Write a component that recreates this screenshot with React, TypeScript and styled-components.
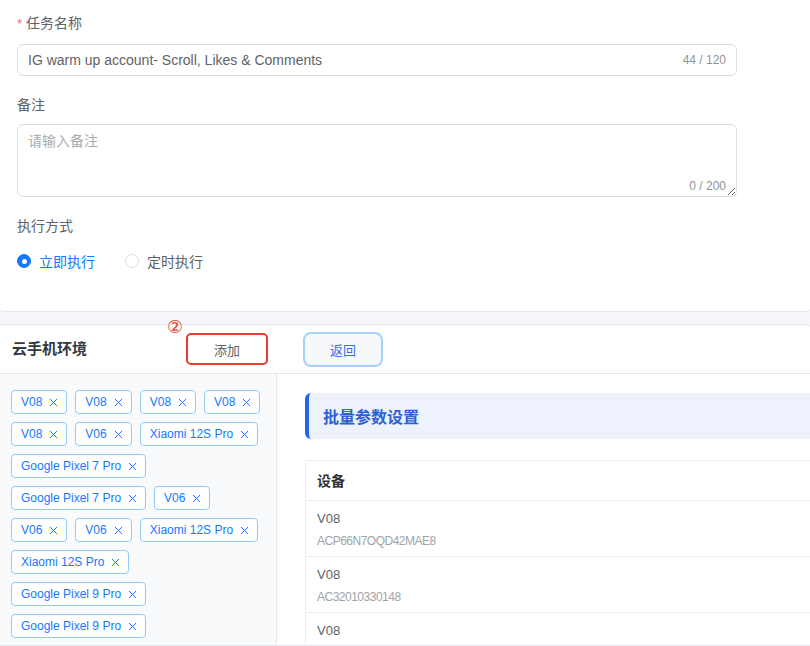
import React from "react";
import styled, { createGlobalStyle } from "styled-components";

const GlobalStyle = createGlobalStyle`
  html, body {
    margin: 0;
    padding: 0;
    background: #f5f7fa;
    font-family: "Liberation Sans", "Noto Sans CJK SC", sans-serif;
  }
  * {
    box-sizing: border-box;
  }
`;

const Page = styled.div`
  width: 810px;
  height: 646px;
  overflow: hidden;
  display: flex;
  flex-direction: column;
  gap: 12px;
  background: #f5f7fa;
`;

const TopCard = styled.section`
  height: 312px;
  flex-shrink: 0;
  background: #fff;
  border-bottom: 1px solid #e4e7ed;
  border-radius: 0 0 4px 4px;
  padding: 12px 17px 0;
`;

const FormItem = styled.div<{ $mb?: number }>`
  width: 720px;
  margin-bottom: ${(p) => p.$mb ?? 18}px;
`;

const Label = styled.div<{ $mb?: number }>`
  font-size: 14px;
  line-height: 22px;
  color: #5f6266;
  margin-bottom: ${(p) => p.$mb ?? 9}px;

  .req {
    color: #f56c6c;
    margin-right: 4px;
    font-size: 13px;
  }
`;

const InputBox = styled.div`
  height: 32px;
  display: flex;
  align-items: center;
  border: 1px solid #dcdfe6;
  border-radius: 6px;
  padding: 0 10px;
  background: #fff;
`;

const TextInput = styled.input`
  flex: 1;
  border: none;
  outline: none;
  padding: 0;
  font-family: inherit;
  font-size: 14px;
  color: #5f6266;
  background: transparent;
`;

const Count = styled.span`
  font-size: 12px;
  color: #909399;
  white-space: nowrap;
`;

const AreaWrap = styled.div`
  position: relative;
`;

const TextArea = styled.textarea`
  display: block;
  width: 100%;
  height: 73px;
  border: 1px solid #dcdfe6;
  border-radius: 6px;
  padding: 5px 10px;
  font-family: inherit;
  font-size: 14px;
  line-height: 22px;
  color: #5f6266;
  outline: none;
  resize: vertical;

  &::placeholder {
    color: #a8abb2;
  }
`;

const AreaCount = styled(Count)`
  position: absolute;
  right: 11px;
  bottom: 4px;
  background: #fff;
`;

const RadioGroup = styled.div`
  display: flex;
  align-items: center;
  gap: 30px;
  height: 22px;
`;

const RadioItem = styled.label<{ $checked?: boolean }>`
  display: flex;
  align-items: center;
  gap: 8px;
  font-size: 14px;
  color: ${(p) => (p.$checked ? "#1677ff" : "#5f6266")};
`;

const RadioDot = styled.span<{ $checked?: boolean }>`
  width: 14px;
  height: 14px;
  border-radius: 50%;
  display: flex;
  align-items: center;
  justify-content: center;
  background: ${(p) => (p.$checked ? "#1677ff" : "#fff")};
  border: 1px solid ${(p) => (p.$checked ? "#1677ff" : "#dcdfe6")};

  &::after {
    content: "";
    width: 5px;
    height: 5px;
    border-radius: 50%;
    background: #fff;
    display: ${(p) => (p.$checked ? "block" : "none")};
  }
`;

const EnvCard = styled.section`
  flex: 1;
  min-height: 0;
  display: flex;
  flex-direction: column;
  background: #fff;
  border-top: 1px solid #e4e7ed;
  border-bottom: 1px solid #e4e7ed;
  border-radius: 4px 4px 0 0;
`;

const EnvHeader = styled.div`
  height: 49px;
  flex-shrink: 0;
  display: flex;
  align-items: center;
  border-bottom: 1px solid #e4e7ed;
`;

const EnvTitle = styled.div`
  width: 186px;
  padding: 0 0 3px 12px;
  font-size: 15px;
  font-weight: 700;
  color: #34383f;
`;

const AddButton = styled.button`
  position: relative;
  width: 82px;
  height: 32px;
  border: 2px solid #e43d2f;
  border-radius: 5px;
  background: #fff;
  font-family: inherit;
  font-size: 13px;
  color: #606266;
  padding: 0;
`;

const StepMark = styled.span`
  position: absolute;
  left: -21px;
  top: -17px;
  font-size: 18px;
  line-height: 18px;
  color: #e43d2f;
  font-family: "DejaVu Sans", sans-serif;
`;

const BackButton = styled.button`
  margin-left: 35px;
  width: 80px;
  height: 35px;
  border: 2px solid #a9cffb;
  border-radius: 8px;
  background: #f6f8fc;
  font-family: inherit;
  font-size: 13px;
  color: #3a6ee0;
  padding: 0;
`;

const EnvBody = styled.div`
  flex: 1;
  min-height: 0;
  display: flex;
`;

const DevicePanel = styled.div`
  width: 277px;
  flex-shrink: 0;
  background: #f8fafc;
  border-right: 1px solid #e4e7ed;
  padding: 16px 12px 0 11px;
  display: flex;
  flex-wrap: wrap;
  align-content: flex-start;
  gap: 8px 8px;
  overflow: hidden;
`;

const Tag = styled.span`
  height: 24px;
  display: inline-flex;
  align-items: center;
  gap: 7px;
  padding: 0 8px 0 9px;
  background: #fff;
  border: 1px solid #91caff;
  border-radius: 4px;
  font-size: 12px;
  color: #1677ff;
  white-space: nowrap;

  svg {
    width: 9px;
    height: 9px;
  }
`;

const MainPanel = styled.div`
  flex: 1;
  min-width: 0;
  padding: 19px 0 0 28px;
  overflow: hidden;
`;

const Banner = styled.div`
  height: 46px;
  display: flex;
  align-items: center;
  padding-left: 14px;
  background: #edf2fc;
  border-left: 4px solid #2563eb;
  border-radius: 6px 0 0 6px;
  font-size: 16px;
  font-weight: 700;
  color: #2d5fd6;
`;

const Table = styled.div`
  margin-top: 21px;
  border-top: 1px solid #ebeef5;
  border-left: 1px solid #ebeef5;
`;

const HeadCell = styled.div`
  height: 40px;
  display: flex;
  align-items: center;
  padding: 0 0 1px 11px;
  border-bottom: 1px solid #ebeef5;
  font-size: 14px;
  font-weight: 700;
  color: #303133;
`;

const Row = styled.div`
  height: 56px;
  padding: 7px 11px 0;
  border-bottom: 1px solid #ebeef5;
`;

const RowName = styled.div`
  font-size: 13px;
  line-height: 22px;
  color: #5f6266;
`;

const RowSerial = styled.div`
  font-size: 12px;
  line-height: 22px;
  letter-spacing: -0.5px;
  color: #a0a3a8;
`;

const CloseIcon = () => (
  <svg viewBox="0 0 10 10" fill="none" stroke="currentColor" strokeWidth="1.1">
    <path d="M1 1L9 9M9 1L1 9" />
  </svg>
);

const tags = [
  "V08", "V08", "V08", "V08",
  "V08", "V06", "Xiaomi 12S Pro",
  "Google Pixel 7 Pro",
  "Google Pixel 7 Pro", "V06",
  "V06", "V06", "Xiaomi 12S Pro",
  "Xiaomi 12S Pro",
  "Google Pixel 9 Pro",
  "Google Pixel 9 Pro",
];

const rows = [
  { name: "V08", serial: "ACP66N7OQD42MAE8" },
  { name: "V08", serial: "AC32010330148" },
  { name: "V08", serial: "" },
];

export default function App() {
  return (
    <>
      <GlobalStyle />
      <Page>
        <TopCard>
          <FormItem>
            <Label>
              <span className="req">*</span>任务名称
            </Label>
            <InputBox>
              <TextInput defaultValue="IG warm up account- Scroll, Likes & Comments" />
              <Count>44 / 120</Count>
            </InputBox>
          </FormItem>
          <FormItem>
            <Label $mb={8}>备注</Label>
            <AreaWrap>
              <TextArea placeholder="请输入备注" />
              <AreaCount>0 / 200</AreaCount>
            </AreaWrap>
          </FormItem>
          <FormItem>
            <Label $mb={13}>执行方式</Label>
            <RadioGroup>
              <RadioItem $checked>
                <RadioDot $checked />
                立即执行
              </RadioItem>
              <RadioItem>
                <RadioDot />
                定时执行
              </RadioItem>
            </RadioGroup>
          </FormItem>
        </TopCard>

        <EnvCard>
          <EnvHeader>
            <EnvTitle>云手机环境</EnvTitle>
            <AddButton>
              <StepMark>②</StepMark>
              添加
            </AddButton>
            <BackButton>返回</BackButton>
          </EnvHeader>
          <EnvBody>
            <DevicePanel>
              {tags.map((t, i) => (
                <Tag key={i}>
                  {t}
                  <CloseIcon />
                </Tag>
              ))}
            </DevicePanel>
            <MainPanel>
              <Banner>批量参数设置</Banner>
              <Table>
                <HeadCell>设备</HeadCell>
                {rows.map((r, i) => (
                  <Row key={i}>
                    <RowName>{r.name}</RowName>
                    {r.serial && <RowSerial>{r.serial}</RowSerial>}
                  </Row>
                ))}
              </Table>
            </MainPanel>
          </EnvBody>
        </EnvCard>
      </Page>
    </>
  );
}
